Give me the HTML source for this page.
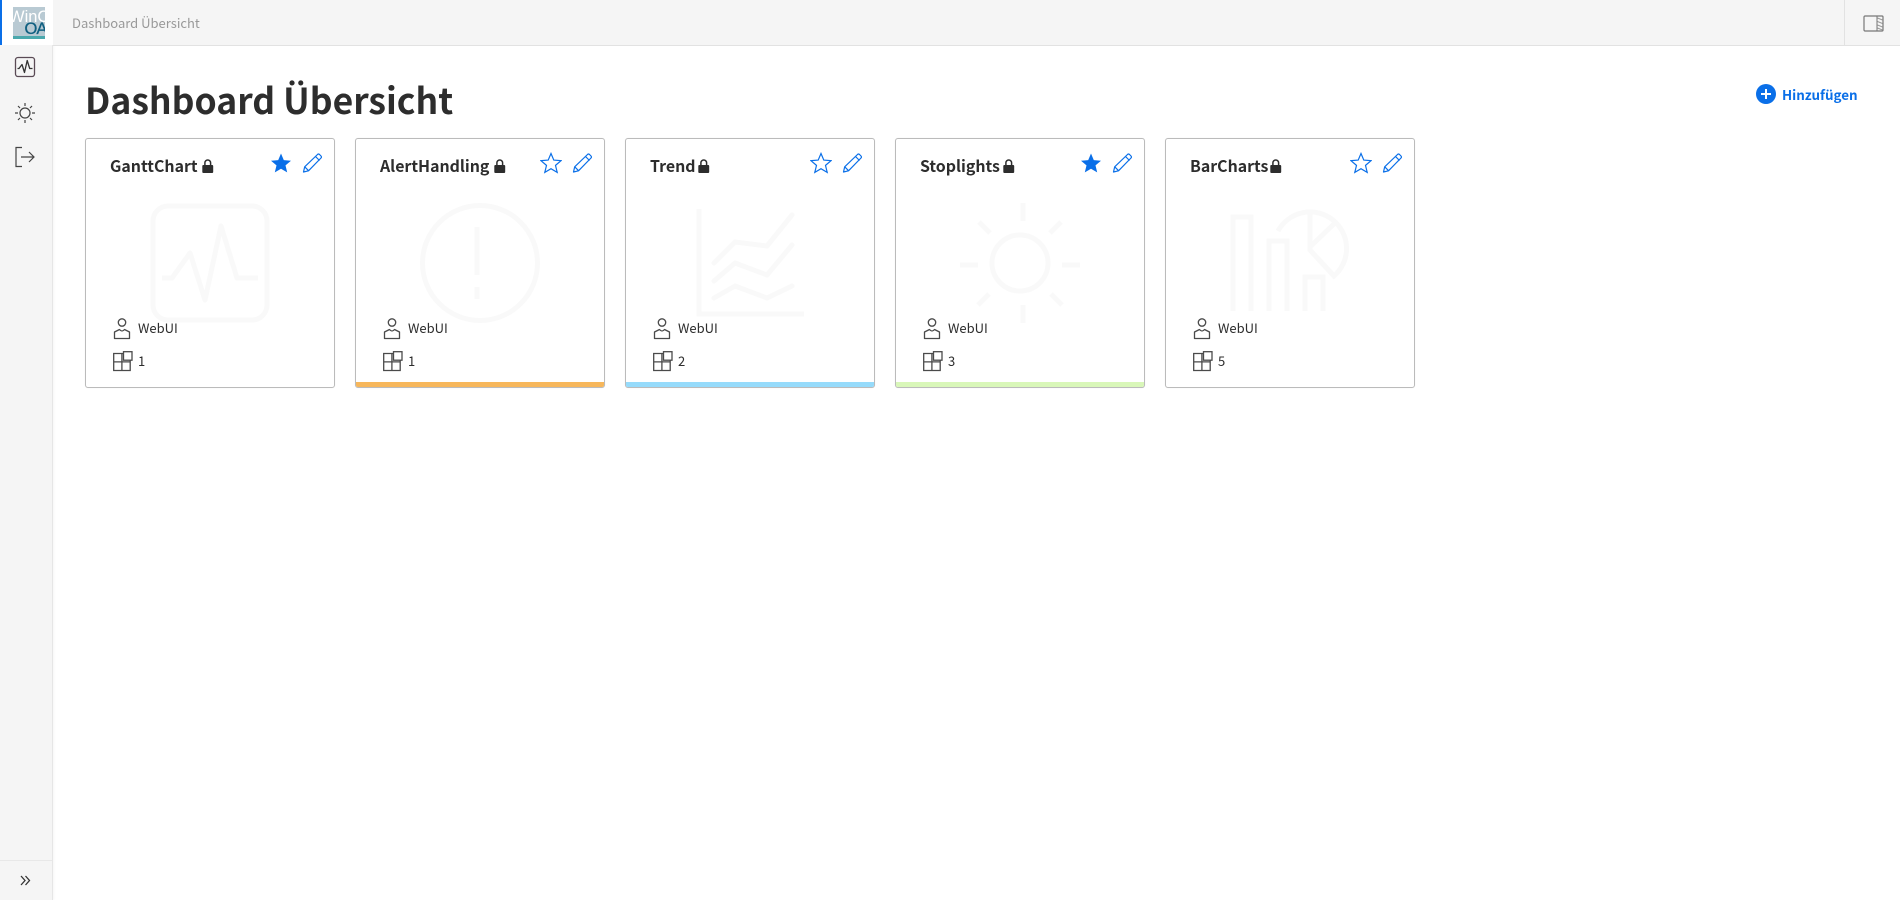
<!DOCTYPE html>
<html lang="de"><head><meta charset="utf-8"><title>Dashboard Übersicht</title>
<style>
*{box-sizing:border-box;margin:0;padding:0}
html,body{width:1900px;height:900px;overflow:hidden;background:#fff;font-family:"Noto Sans CJK SC","Liberation Sans",sans-serif;color:#2d2d2d}
.abs,svg,.card,.t{position:absolute}
.t{white-space:nowrap;line-height:20px}
.card{top:138px;width:250px;height:250px;border:1px solid #bbb;border-radius:3px;background:#fff;overflow:hidden;box-shadow:0 0 1px rgba(0,0,0,.08)}
.bar{position:absolute;left:0;right:0;bottom:0;height:5px}
.title{left:24px;top:15px;font-size:15.900px;font-weight:600;line-height:24px;white-space:nowrap;position:absolute}
.small{font-size:13px;position:absolute;line-height:18px;white-space:nowrap}
</style></head><body>
<svg width="0" height="0" style="position:absolute"><defs>
<g id="lock"><path d="M1.300 6h8.900a1 1 0 0 1 1 1v6a1 1 0 0 1-1 1H1.300a1 1 0 0 1-1-1V7a1 1 0 0 1 1-1z" fill="#2d2d2d"/><path d="M2.900 6.500V3.800a2.850 2.850 0 0 1 5.700 0V6.500" fill="none" stroke="#2d2d2d" stroke-width="1.500"/></g>
<path id="star" d="M11 1.500l2.800 6.600 7.200.6-5.500 4.700 1.700 7-6.200-3.700-6.200 3.700 1.700-7L1 8.700l7.200-.6z"/>
<g id="pen" fill="none" stroke="#0a6fe8" stroke-width="1.200" stroke-linejoin="round"><path d="M1.500 19l1.200-5.200L15.500 1.500a1.500 1.500 0 0 1 2 0l1.500 1.500a1.500 1.500 0 0 1 0 2L6.500 17.800z"/><path d="M2.700 13.800l4 4M13.500 3.500l4 4"/></g>
<g id="user" fill="none" stroke="#4a4a4a" stroke-width="1.300" stroke-linejoin="round"><circle cx="9" cy="4.500" r="3.700"/><path d="M1.500 20.500V14l5-2.500q2.500 3 5 0l5 2.500v6.500z"/></g>
<g id="grid" fill="none" stroke="#4a4a4a" stroke-width="1.300"><path d="M.7 2.500h16.500v17H.7zM8.900 2.500v17M.7 10.900h16.500"/><rect x="10.500" y=".7" width="8.500" height="8.500" fill="#fff"/></g>
</defs></svg>

<!-- sidebar -->
<div class="abs" style="left:0;top:0;width:53px;height:900px;background:#f5f5f5;border-right:1px solid #e6e6e6;box-shadow:1px 0 2px rgba(0,0,0,.04)"></div>
<div class="abs" style="left:0;top:0;width:53px;height:45px;background:#fff"></div>
<div class="abs" style="left:0;top:0;width:2px;height:45px;background:#0a6fe8"></div>
<div class="abs" style="left:13px;top:7px;width:32px;height:32px;background:#b9cad3;overflow:hidden">
  <div class="t" style="left:-4px;top:0;color:#fff;font-size:16.500px;font-family:'Liberation Sans',sans-serif">WinC</div>
  <div class="t" style="left:11.500px;top:12px;color:#0f5f80;font-size:16.500px;letter-spacing:-1px;font-family:'Liberation Sans',sans-serif;-webkit-text-stroke:.3px #0f5f80">OA</div>
  <div class="abs" style="left:0;bottom:0;width:32px;height:3px;background:#4aa8ad"></div>
</div>
<svg style="left:14px;top:56px" width="22" height="22" viewBox="0 0 22 22" fill="none"><rect x="1.500" y="1.500" width="19" height="19" rx="2.500" stroke="#5a4a55" stroke-width="1.300"/><path d="M3.500 12.500h1.500L8 8.500l2.500 8 2.700-12 2.500 8h2.800" stroke="#333" stroke-width="1.300" stroke-linejoin="round"/></svg>
<svg style="left:14px;top:102px" width="22" height="22" viewBox="0 0 22 22" fill="none" stroke="#444" stroke-width="1.200"><circle cx="11" cy="11" r="5"/><path d="M11 1v3M11 18v3M1 11h3M18 11h3M4 4l2 2M16 16l2 2M18 4l-2 2M6 16l-2 2"/></svg>
<svg style="left:14px;top:146px" width="22" height="22" viewBox="0 0 22 22" fill="none" stroke="#444" stroke-width="1.200"><path d="M8 1.500H2v19h6M7 11h13M15 6l5 5-5 5"/></svg>
<div class="abs" style="left:0;top:860px;width:52px;height:1px;background:#e8e8e8"></div>
<svg style="left:20px;top:875px" width="11" height="11" viewBox="0 0 11 11" fill="none" stroke="#333" stroke-width="1.300"><path d="M1 1l4 4.500L1 10M5.500 1l4 4.500-4 4.500"/></svg>

<!-- top bar -->
<div class="abs" style="left:53px;top:0;width:1847px;height:46px;background:#f5f5f5;border-bottom:1px solid #e2e2e2"></div>
<div class="t" style="left:72px;top:13px;font-size:13px;color:#999">Dashboard Übersicht</div>
<div class="abs" style="left:1844px;top:0;width:1px;height:46px;background:#e2e2e2"></div>
<svg style="left:1863px;top:15px" width="21" height="17" viewBox="0 0 21 17" fill="none"><rect x="1" y="1" width="19" height="15" rx="1" stroke="#777" stroke-width="1.200"/><path d="M14 1v15" stroke="#777"/><path d="M14.500 3l5 2M14.500 6.500l5 2M14.500 10l5 2M14.500 13l5 2" stroke="#999"/></svg>

<!-- heading -->
<div class="t" style="left:85px;top:78px;font-size:35.500px;font-weight:700;line-height:44px;color:#2d2d2d">Dashboard Übersicht</div>
<svg style="left:1756px;top:84px" width="20" height="20" viewBox="0 0 20 20"><circle cx="10" cy="10" r="10" fill="#0a6fe8"/><path d="M10 5v10M5 10h10" stroke="#fff" stroke-width="2"/></svg>
<div class="t" style="left:1782px;top:84px;font-size:13.400px;font-weight:700;color:#0a6fe8">Hinzufügen</div>

<!-- card 1 -->
<div class="card" style="left:85px">
  <svg style="left:64px;top:64px" width="120" height="120" viewBox="0 0 120 120" fill="none" stroke="#f9f9f9" stroke-width="5" stroke-linejoin="round"><rect x="3" y="3" width="114" height="114" rx="15"/><path d="M12 75h10l18-25 15 47 16-74 16 52h21"/></svg>
  <div class="title">GanttChart</div>
  <svg style="left:116px;top:20px" width="12" height="15"><use href="#lock"/></svg>
  <svg style="left:184px;top:13px" width="22" height="22" fill="#0a6fe8"><use href="#star"/></svg>
  <svg style="left:216px;top:14px" width="21" height="21"><use href="#pen"/></svg>
  <svg style="left:27px;top:179px" width="18" height="22"><use href="#user"/></svg>
  <div class="small" style="left:52px;top:180px">WebUI</div>
  <svg style="left:27px;top:212px" width="20" height="22"><use href="#grid"/></svg>
  <div class="small" style="left:52px;top:213px">1</div>
</div>

<!-- card 2 -->
<div class="card" style="left:355px">
  <svg style="left:64px;top:64px" width="120" height="120" viewBox="0 0 120 120" fill="none" stroke="#f9f9f9" stroke-width="5"><circle cx="60" cy="60" r="57.500"/><path d="M57 24v48M57 84v12"/></svg>
  <div class="title">AlertHandling</div>
  <svg style="left:138px;top:20px" width="12" height="15"><use href="#lock"/></svg>
  <svg style="left:184px;top:13px" width="22" height="22" fill="none" stroke="#0a6fe8" stroke-width="1.200"><use href="#star"/></svg>
  <svg style="left:216px;top:14px" width="21" height="21"><use href="#pen"/></svg>
  <svg style="left:27px;top:179px" width="18" height="22"><use href="#user"/></svg>
  <div class="small" style="left:52px;top:180px">WebUI</div>
  <svg style="left:27px;top:212px" width="20" height="22"><use href="#grid"/></svg>
  <div class="small" style="left:52px;top:213px">1</div>
  <div class="bar" style="background:#f7b75b"></div>
</div>

<!-- card 3 -->
<div class="card" style="left:625px">
  <svg style="left:64px;top:64px" width="120" height="120" viewBox="0 0 120 120" fill="none" stroke="#f9f9f9" stroke-width="5" stroke-linecap="round" stroke-linejoin="round"><path d="M9 6v105h105" stroke-linecap="butt" stroke-linejoin="miter"/><path d="M24 60l21-21 32 4 25-31"/><path d="M24 78l21-18 32 12 25-30"/><path d="M24 95l21-12 32 12 25-12"/></svg>
  <div class="title">Trend</div>
  <svg style="left:72px;top:20px" width="12" height="15"><use href="#lock"/></svg>
  <svg style="left:184px;top:13px" width="22" height="22" fill="none" stroke="#0a6fe8" stroke-width="1.200"><use href="#star"/></svg>
  <svg style="left:216px;top:14px" width="21" height="21"><use href="#pen"/></svg>
  <svg style="left:27px;top:179px" width="18" height="22"><use href="#user"/></svg>
  <div class="small" style="left:52px;top:180px">WebUI</div>
  <svg style="left:27px;top:212px" width="20" height="22"><use href="#grid"/></svg>
  <div class="small" style="left:52px;top:213px">2</div>
  <div class="bar" style="background:#96dbfb"></div>
</div>

<!-- card 4 -->
<div class="card" style="left:895px">
  <svg style="left:64px;top:64px" width="120" height="120" viewBox="0 0 120 120" fill="none" stroke="#f9f9f9" stroke-width="5"><circle cx="60" cy="60" r="28"/><path d="M63 0v18M63 102v18M0 62h18M102 62h18M19 19l11 11M91 91l11 11M101 19L90 30M29 91L18 102"/></svg>
  <div class="title">Stoplights</div>
  <svg style="left:107px;top:20px" width="12" height="15"><use href="#lock"/></svg>
  <svg style="left:184px;top:13px" width="22" height="22" fill="#0a6fe8"><use href="#star"/></svg>
  <svg style="left:216px;top:14px" width="21" height="21"><use href="#pen"/></svg>
  <svg style="left:27px;top:179px" width="18" height="22"><use href="#user"/></svg>
  <div class="small" style="left:52px;top:180px">WebUI</div>
  <svg style="left:27px;top:212px" width="20" height="22"><use href="#grid"/></svg>
  <div class="small" style="left:52px;top:213px">3</div>
  <div class="bar" style="background:#d9f7b9"></div>
</div>

<!-- card 5 -->
<div class="card" style="left:1165px">
  <svg style="left:64px;top:64px" width="120" height="120" viewBox="0 0 120 120" fill="none" stroke="#f9f9f9" stroke-width="5"><path d="M3 108V14h18v94M39 108V38h18v70M75 108V74h18v34"/><path d="M48 28A36.500 36.500 0 1 1 104 73L80 47V8M81 43l26-25"/></svg>
  <div class="title">BarCharts</div>
  <svg style="left:104px;top:20px" width="12" height="15"><use href="#lock"/></svg>
  <svg style="left:184px;top:13px" width="22" height="22" fill="none" stroke="#0a6fe8" stroke-width="1.200"><use href="#star"/></svg>
  <svg style="left:216px;top:14px" width="21" height="21"><use href="#pen"/></svg>
  <svg style="left:27px;top:179px" width="18" height="22"><use href="#user"/></svg>
  <div class="small" style="left:52px;top:180px">WebUI</div>
  <svg style="left:27px;top:212px" width="20" height="22"><use href="#grid"/></svg>
  <div class="small" style="left:52px;top:213px">5</div>
</div>
</body></html>
